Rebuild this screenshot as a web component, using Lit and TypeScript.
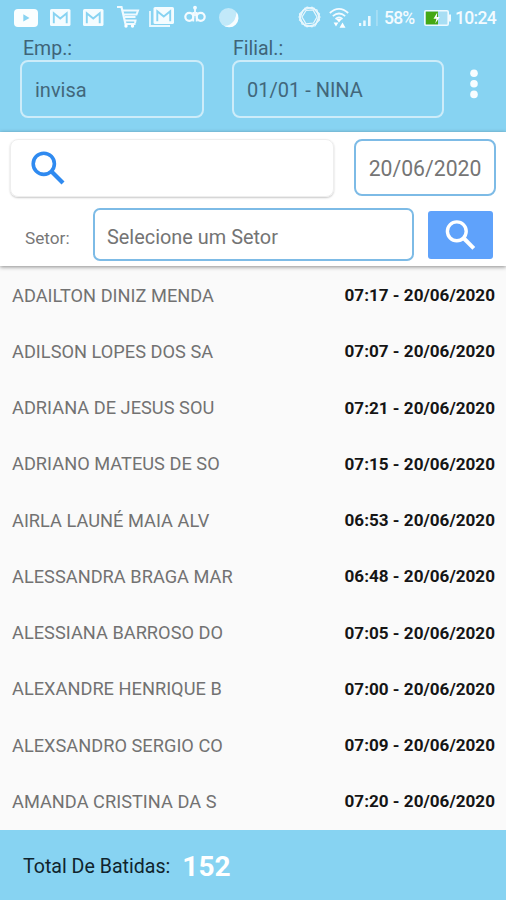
import { LitElement, html, css, svg } from "lit";
import { customElement } from "lit/decorators.js";

const envelope = () => svg`
  <rect x="0" y="0" width="20.5" height="17" rx="1.6" fill="#f4fcff"/>
  <path d="M3.8 14.2V4.2L10.25 9.6L16.7 4.2V14.2" fill="none" stroke="#87d3f2" stroke-width="1.9"/>`;

@customElement("status-bar")
class StatusBar extends LitElement {
  static styles = css`
    :host { display: flex; height: 36px; padding: 0 10px 0 14px; box-sizing: border-box; justify-content: space-between; color: #f4fbff; font-size: 17.5px; line-height: 36px; }
    .group { display: flex; align-items: flex-start; }
    svg { display: block; flex: none; overflow: visible; }
    .tube { margin: 9px 11.5px 0 0; }
    .mail { margin: 9px 13px 0 0; }
    .cart { margin: 6px 10px 0 0; }
    .mails { margin: 7px 11px 0 0; }
    .loops { margin: 5px 12px 0 -1px; }
    .moon { margin-top: 7px; }
    .swirl { margin: 6px 8px 0 0; }
    .wifi { margin: 8px 9px 0 0; }
    .signal { margin: 9px 5px 0 0; }
    .battery { margin: 10px 4px 0 9px; }
    .percent { width: 31px; letter-spacing: -0.8px; font-weight: 500; white-space: nowrap; }
    .clock { width: 41px; letter-spacing: -0.7px; font-weight: 500; white-space: nowrap; }
  `;
  render() {
    return html`
      <div class="group">
        <svg class="tube" width="24" height="18"><rect width="24" height="18" rx="4" fill="#fafeff"/><path d="M9.3 5.2V12.6L15.5 8.9Z" fill="#87d3f2"/></svg>
        <svg class="mail" width="20.5" height="17">${envelope()}</svg>
        <svg class="mail" width="20.5" height="17">${envelope()}</svg>
        <svg class="cart" width="22" height="22" fill="none" stroke="#f0faff">
          <path d="M0 1H4.5L8.5 18H18.5" stroke-width="2.2"/><path d="M6 4.5H21L19.5 8.5H7M8 11H18.5M8 14.5H18.5L18 17" stroke-width="2"/>
          <circle cx="9" cy="20" r="1.7" fill="#fff" stroke="none"/><circle cx="15.5" cy="20" r="1.7" fill="#fff" stroke="none"/></svg>
        <svg class="mails" width="25" height="20"><path d="M1 4V19H21" fill="none" stroke="#e8f8fe" stroke-width="1.8"/><g transform="translate(4.5 0)">${envelope()}</g></svg>
        <svg class="loops" width="22" height="18" fill="none" stroke="#f4fbff" stroke-width="2.2">
          <circle cx="5.3" cy="11.8" r="4"/><circle cx="16.7" cy="11.8" r="4"/><path d="M9.3 7V16.5M12.7 7V16.5" stroke-width="1.8"/><path d="M11 3V11" stroke-width="1.8"/><circle cx="11" cy="2.7" r="1.9" fill="#f4fbff" stroke="none"/></svg>
        <svg class="moon" width="21" height="21"><circle cx="10.5" cy="10.5" r="9.5" fill="#c2e9f9"/><path d="M18.5 5A9.5 9.5 0 0 1 5 18.2Q8 19.5 12 17.5Q18 14 18.5 5Z" fill="#f8fdff"/></svg>
      </div>
      <div class="group">
        <svg class="swirl" width="23" height="22" fill="none" stroke="#e8f7fd" stroke-width="1.2">
          <path d="M7 2H16L22 11L17 20H7L1 11Z"/><path d="M9 1.2L19 4L21.5 14L14 20.8L4 18L1.5 8Z"/><path d="M5 4.3L14 1.2L21.5 8L18 18L9 20.8L1.5 14Z"/><path d="M8 4.5L15 4L19 11L15.5 17L8 17.8L4 11Z"/></svg>
        <svg class="wifi" width="20" height="21" fill="none" stroke="#f4fbff" stroke-width="1.7">
          <path d="M.8 5Q10 -3.2 19.2 5M3.8 8.2Q10 2.8 16.2 8.2M6.5 11Q10 8 13.5 11"/><path d="M7.2 11H12.8L10 14.5ZM4.6 14.5H9.4L7 18.5ZM10.5 19.8H16.5L13.5 14.5Z" fill="#fff" stroke="none"/></svg>
        <svg class="signal" width="21" height="18"><path d="M1 14H3.2V17H1ZM5.2 11.5H7.7V17H5.2ZM10 7H12.6V17H10Z" fill="#ecf9ff"/><path d="M18.3 1H19.6V17H18.3Z" fill="#b3e2f5"/></svg>
        <span class="percent">58%</span>
        <svg class="battery" width="27" height="16"><rect x=".8" y=".8" width="23.4" height="14.4" rx="1.2" fill="#a8def4" stroke="#effaff" stroke-width="1.6"/><rect x="1.8" y="1.6" width="12.2" height="12.8" fill="#44a814"/><rect x="25" y="4.5" width="2" height="7" fill="#effaff"/><path d="M13.3 2.5L9.5 8.7H12.4L11.2 13.5L15.8 7H12.8Z" fill="#fff"/></svg>
        <span class="clock">10:24</span>
      </div>`;
  }
}

@customElement("punch-row")
class PunchRow extends LitElement {
  static properties = { name: {}, time: {} };
  declare name: string;
  declare time: string;
  static styles = css`
    :host { display: flex; height: 56.25px; align-items: center; justify-content: space-between; padding: 0 11px 0 12px; white-space: nowrap; }
    .name { font-size: 18.2px; letter-spacing: .03px; color: #727272; }
    .time { font-size: 17.1px; font-weight: 700; color: #151515; }
  `;
  render() {
    return html`<span class="name">${this.name}</span><span class="time">${this.time} - 20/06/2020</span>`;
  }
}

const punches = [
  ["ADAILTON DINIZ MENDA", "07:17"], ["ADILSON LOPES DOS SA", "07:07"],
  ["ADRIANA DE JESUS SOU", "07:21"], ["ADRIANO MATEUS DE SO", "07:15"],
  ["AIRLA LAUNÉ MAIA ALV", "06:53"], ["ALESSANDRA BRAGA MAR", "06:48"],
  ["ALESSIANA BARROSO DO", "07:05"], ["ALEXANDRE HENRIQUE B", "07:00"],
  ["ALEXSANDRO SERGIO CO", "07:09"], ["AMANDA CRISTINA DA S", "07:20"],
];

@customElement("app-root")
class AppRoot extends LitElement {
  static styles = css`
    :host { display: flex; flex-direction: column; height: 900px; background: #fafafa; font-family: Roboto, sans-serif; overflow: hidden; }
    * { box-sizing: border-box; }
    svg { display: block; overflow: visible; }
    header { height: 132px; flex: none; background: #87d3f2; color: #42677b; }
    .company { display: flex; padding-left: 20px; }
    .field { display: flex; flex-direction: column; margin-right: 28px; }
    .emp { width: 184px; }
    .filial { width: 212px; margin-right: 25px; }
    .field label { height: 24px; padding-left: 3px; font-size: 19.5px; line-height: 26px; color: #3f6478; }
    .filial label { padding-left: 1px; }
    .box { height: 58px; border: 2px solid #cdecf9; border-radius: 8px; padding-left: 13px; line-height: 56px; font-size: 20px; white-space: nowrap; }
    .more { margin-top: 32px; }
    .filters { height: 134px; flex: none; background: #fff; box-shadow: 0 1px 4px rgba(0,0,0,.45); padding: 7px 10px 0; z-index: 1; }
    .line { display: flex; }
    .search { width: 324px; height: 58px; border-radius: 8px; border: 1px solid #eee; box-shadow: 0 1px 2px rgba(0,0,0,.22); padding: 11px 0 0 20px; }
    .date { width: 142px; height: 57px; margin-left: 20px; border: 2px solid #7dbbe6; border-radius: 8px; line-height: 56px; text-align: center; font-size: 21.2px; color: #757575; }
    .sector { margin-top: 11px; }
    .sector label { width: 83px; padding-left: 15px; line-height: 60px; font-size: 17.2px; color: #777; }
    .select { width: 321px; height: 53px; border: 2px solid #7dbbe6; border-radius: 7px; padding-left: 12px; line-height: 56px; font-size: 19.9px; color: #747474; }
    .go { width: 65px; height: 48px; margin: 3px 0 0 14px; padding: 9px 0 0 17px; border: 0; border-radius: 3px; background: #5fa2fb; display: flex; align-items: flex-start; }
    .list { flex: 1; padding-top: 1px; min-height: 0; overflow: hidden; }
    footer { height: 70px; flex: none; background: #87d3f2; display: flex; align-items: center; padding: 2px 0 0 23px; font-size: 19.6px; color: #10242d; }
    .count { margin-left: 12px; font-size: 28px; font-weight: 700; color: #fff; }
  `;
  render() {
    return html`
      <header>
        <status-bar></status-bar>
        <div class="company">
          <div class="field emp"><label>Emp.:</label><div class="box">invisa</div></div>
          <div class="field filial"><label>Filial.:</label><div class="box">01/01 - NINA</div></div>
          <svg class="more" width="10" height="32" fill="#f8fdff"><circle cx="5" cy="5.2" r="3.8"/><circle cx="5" cy="15.8" r="3.8"/><circle cx="5" cy="26.4" r="3.8"/></svg>
        </div>
      </header>
      <section class="filters">
        <div class="line">
          <div class="search"><svg width="34" height="34" fill="none" stroke="#2f8af0" stroke-width="3.6"><circle cx="12.8" cy="12.8" r="10.6"/><path d="M20.5 20.5L32 32" stroke-width="4.2"/></svg></div>
          <div class="date">20/06/2020</div>
        </div>
        <div class="line sector">
          <label>Setor:</label>
          <div class="select">Selecione um Setor</div>
          <button class="go" aria-label="Buscar"><svg width="31" height="31" fill="none" stroke="#fff" stroke-width="3.4"><circle cx="11.8" cy="11.3" r="9.4"/><path d="M18.5 18L28.8 28.3" stroke-width="4"/></svg></button>
        </div>
      </section>
      <main class="list">${punches.map(([n, t]) => html`<punch-row .name=${n} .time=${t}></punch-row>`)}</main>
      <footer><span>Total De Batidas:</span><span class="count">152</span></footer>`;
  }
}
